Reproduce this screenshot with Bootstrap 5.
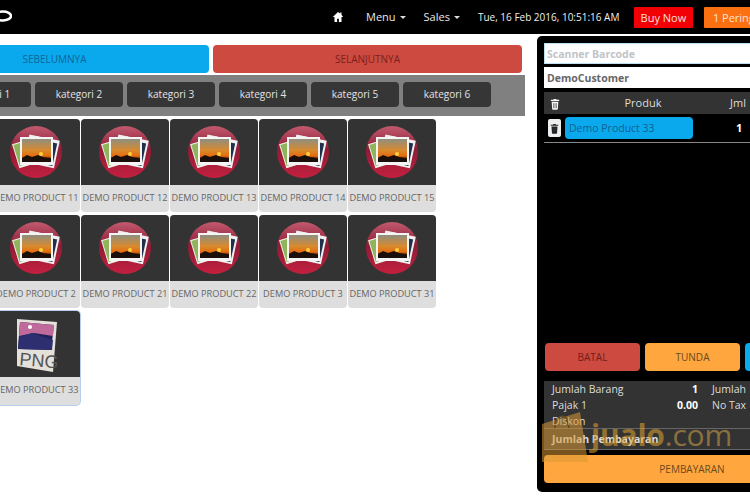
<!DOCTYPE html>
<html lang="id">
<head>
<meta charset="utf-8">
<title>POS</title>
<link href="https://cdn.jsdelivr.net/npm/bootstrap@5.3.0/dist/css/bootstrap.min.css" rel="stylesheet">
<style>
html,body{width:750px;height:500px;overflow:hidden;background:#fff;font-family:"Open Sans",sans-serif}
.pos-stage{width:850px;height:500px;position:relative}
.pos-top{height:34px;background:#000;padding:0;flex-wrap:nowrap;justify-content:flex-start}
.pos-logo{width:12px;height:34px;margin-right:320px;flex:none}
.pos-home{width:12px;height:12px;margin-right:22px;flex:none}
.pos-link{color:#e8e8e8;font-size:11px;white-space:nowrap}
.pos-link.menu-a{margin-right:18px}
.pos-link.menu-b{margin-right:18px}
.pos-caret{display:inline-block;border-top:3px solid #ddd;border-left:3px solid transparent;border-right:3px solid transparent;margin-left:4px;vertical-align:2px}
.pos-date{width:140px;margin-right:16px;font-size:10px;color:#eee;white-space:nowrap}
.pos-buy,.pos-alert{font-size:11px;line-height:1;border:0;border-radius:1px;height:21px;padding:0;color:#fde0d8;flex:none}
.pos-buy{width:59px;background:#f20006;margin-right:11px}
.pos-alert{width:90px;background:#fb7112;text-align:left;padding-left:9px}
.pos-body{margin-left:-57px;gap:12px;align-items:flex-start}
.pos-left{width:582px;flex:none;padding-top:11px}
.pos-nav{gap:4px}
.pos-nav .btn{height:28px;border:0;border-radius:4px;font-size:10px;padding:0;line-height:28px;flex:none}
.pos-prev,.pos-prev:hover{width:309px;margin-left:-43px;background:#0aa9ee;color:#0f6596}
.pos-next,.pos-next:hover{width:309px;background:#cd4a40;color:#7a1f1b}
.pos-cats{background:#808080;height:41px;margin-top:2px;padding:7px 0 0 0;gap:4px}
.pos-cats .btn{width:88px;height:25px;padding:0;line-height:25px;background:#363636;color:#e4e4e4;border:0;border-radius:4px;font-size:10px;flex:none}
.pos-grid{display:grid;grid-template-columns:repeat(5,88px);gap:3px 1px;margin-top:3px;margin-left:49px}
.pos-tile{height:93px;border-radius:4px;overflow:hidden;background:#dedede}
.pos-tile.sel{height:94px;box-shadow:0 0 0 1px #b7cdf0}
.pos-pic{height:66px;background:#333;display:flex;align-items:center;justify-content:center}
.pos-pic svg{width:56px;height:56px}
.pos-name{height:27px;line-height:26px;text-align:center;font-size:9.2px;color:#666;white-space:nowrap;overflow:hidden}
.pos-panel{width:240px;flex:none;height:456px;margin-top:2px;background:#000;border-radius:5px;padding:7px 7px 0 7px}
.pos-panel .form-control{height:21px;border-radius:0;border:1px solid #bcdff2;padding:0 2px;font-size:10.5px;font-weight:700;color:#666;width:225px;margin-bottom:3px}
.pos-panel .form-control::placeholder{color:#bfc4c8;opacity:1}
.pos-panel .cust{border-color:#fff}
.pos-head{height:22px;background:#333;margin-top:4px;color:#ddd;font-size:11px;align-items:center}
.pos-head .hd-trash{width:22px;text-align:center;flex:none}
.pos-head .hd-prod{width:158px;text-align:center;margin-left:-2px}
.pos-head .hd-jml{margin-left:8px}
.pos-row{height:29px;border-bottom:1px solid #888;align-items:center;padding-left:3px}
.pos-trashbtn{width:13px;height:18px;background:#eee;border-radius:2px;display:flex;align-items:center;justify-content:center;flex:none;margin-left:1px}
.pos-item{width:128px;height:22px;background:#0aa9ee;color:#126092;font-size:10.5px;line-height:22px;border-radius:4px;padding-left:4px;margin-left:4px;flex:none}
.pos-qty{font-size:11px;font-weight:700;color:#fff;margin-left:43px}
.pos-actions{margin-top:200px;gap:5px;margin-left:1px}
.pos-actions .btn{width:95px;height:28px;border:0;border-radius:4px;padding:0;font-size:10px;line-height:28px;flex:none}
.pos-batal,.pos-batal:hover{background:#cd4a40;color:#6e1e1a}
.pos-tunda,.pos-tunda:hover{background:#ffa63f;color:#6a4a1c}
.pos-third,.pos-third:hover{background:#0aa9ee;color:#126092}
.pos-sum{margin-top:10px;height:69px;background:#333;color:#ddd;font-size:10.5px;padding-left:8px;width:225px}
.pos-sum .sum-line{height:16px;line-height:16px}
.sum-a{width:146px;display:flex;justify-content:space-between;flex:none}
.sum-b{margin-left:14px;white-space:nowrap}
.sum-total{font-weight:700;border-top:1px solid #666;border-bottom:1px solid #666;height:22px!important;line-height:20px!important;margin:-1px 0 0 -8px;padding-left:8px}
.pos-pay,.pos-pay:hover{width:296px;height:28px;margin-top:5px;background:#ffa63f;color:#6a4a1c;border:0;border-radius:4px;font-size:10px;padding:0;line-height:28px;display:block}
.pos-mark{position:absolute;left:541px;top:408px;display:flex;align-items:flex-end;pointer-events:none;opacity:.55}
.pos-mark svg{width:50px;height:58px;flex:none}
.pos-mark-text{font-size:30px;line-height:34px;color:#d4a24a;margin-bottom:14px;letter-spacing:-.2px}
.pos-mark-text b{font-weight:700;color:#e0a52e}
</style>
</head>
<body>
<svg width="0" height="0" class="d-block">
<defs>
<linearGradient id="sunset" x1="0" y1="0" x2="0" y2="1"><stop offset="0" stop-color="#8f8f80"/><stop offset=".5" stop-color="#d98a2c"/><stop offset=".72" stop-color="#e56d12"/><stop offset="1" stop-color="#2a1408"/></linearGradient>
<linearGradient id="ball" x1="0" y1="0" x2="0" y2="1"><stop offset="0" stop-color="#c25a6e"/><stop offset=".45" stop-color="#8e1c36"/><stop offset="1" stop-color="#c4203f"/></linearGradient>
<symbol id="pic-stack" viewBox="0 0 56 56">
<circle cx="28" cy="28" r="26" fill="url(#ball)"/>
<g transform="rotate(-17 20 28)"><rect x="7" y="16" width="28" height="25" fill="#eef2e8"/><rect x="8" y="17" width="26" height="22" fill="#8fb45c"/></g>
<g transform="rotate(12 32 28)"><rect x="18" y="13" width="31" height="28" fill="#f0f0f0"/><rect x="21" y="16" width="26" height="23" fill="#20304a"/></g>
<rect x="12" y="13" width="33" height="28" fill="#f4f4f4"/>
<rect x="14" y="15" width="29" height="23" fill="url(#sunset)"/>
<path d="M14 38v-4l5-3 5 2 6-2 5 2 8 1v4z" fill="#1a0f0a"/>
<circle cx="33" cy="30" r="2" fill="#ffd23c"/>
</symbol>
<symbol id="trash" viewBox="0 0 12 14">
<path d="M4.500 1h3l.5 1h3v1.400H1V2h3zM2 4.300h8l-.6 8.700a1 1 0 0 1-1 1H3.600a1 1 0 0 1-1-1z" fill="currentColor"/>
<path d="M4.300 6v6M6 6v6M7.700 6v6" stroke="#333" stroke-width=".7"/>
</symbol>
</defs>
</svg>
<div class="pos-stage">
<nav class="navbar pos-top d-flex align-items-center">
<svg class="pos-logo" viewBox="0 0 12 34"><ellipse cx="3" cy="16" rx="8" ry="4.500" fill="none" stroke="#fff" stroke-width="2.500"/></svg>
<svg class="pos-home" viewBox="0 0 12 12"><path d="M6 1 .8 6h1.700v5h2.600V7.700h1.800V11h2.600V6h1.700L9.500 3.700V1.500H8.200v1z" fill="#fff"/></svg>
<span class="pos-link menu-a">Menu<span class="pos-caret"></span></span>
<span class="pos-link menu-b">Sales<span class="pos-caret"></span></span>
<span class="pos-date">Tue, 16 Feb 2016, 10:51:16 AM</span>
<button class="btn pos-buy" type="button">Buy Now</button>
<button class="btn pos-alert" type="button">1 Peringatan</button>
</nav>
<div class="pos-body d-flex">
<div class="pos-left">
<div class="pos-nav d-flex">
<button class="btn pos-prev" type="button">SEBELUMNYA</button>
<button class="btn pos-next" type="button">SELANJUTNYA</button>
</div>
<div class="pos-cats d-flex">
<button class="btn" type="button">kategori 1</button>
<button class="btn" type="button">kategori 2</button>
<button class="btn" type="button">kategori 3</button>
<button class="btn" type="button">kategori 4</button>
<button class="btn" type="button">kategori 5</button>
<button class="btn" type="button">kategori 6</button>
</div>
<div class="pos-grid">
<div class="pos-tile"><div class="pos-pic"><svg><use href="#pic-stack"/></svg></div><div class="pos-name">DEMO PRODUCT 11</div></div>
<div class="pos-tile"><div class="pos-pic"><svg><use href="#pic-stack"/></svg></div><div class="pos-name">DEMO PRODUCT 12</div></div>
<div class="pos-tile"><div class="pos-pic"><svg><use href="#pic-stack"/></svg></div><div class="pos-name">DEMO PRODUCT 13</div></div>
<div class="pos-tile"><div class="pos-pic"><svg><use href="#pic-stack"/></svg></div><div class="pos-name">DEMO PRODUCT 14</div></div>
<div class="pos-tile"><div class="pos-pic"><svg><use href="#pic-stack"/></svg></div><div class="pos-name">DEMO PRODUCT 15</div></div>
<div class="pos-tile"><div class="pos-pic"><svg><use href="#pic-stack"/></svg></div><div class="pos-name">DEMO PRODUCT 2</div></div>
<div class="pos-tile"><div class="pos-pic"><svg><use href="#pic-stack"/></svg></div><div class="pos-name">DEMO PRODUCT 21</div></div>
<div class="pos-tile"><div class="pos-pic"><svg><use href="#pic-stack"/></svg></div><div class="pos-name">DEMO PRODUCT 22</div></div>
<div class="pos-tile"><div class="pos-pic"><svg><use href="#pic-stack"/></svg></div><div class="pos-name">DEMO PRODUCT 3</div></div>
<div class="pos-tile"><div class="pos-pic"><svg><use href="#pic-stack"/></svg></div><div class="pos-name">DEMO PRODUCT 31</div></div>
<div class="pos-tile sel"><div class="pos-pic"><svg viewBox="0 0 56 56"><path d="M9 3 49 6 45 56 9 50z" fill="#e4e0da"/><path d="M12 6 46 9 43 34 10 33z" fill="#1e2358"/><path d="M12 6 46 9 45 20 26 17 11 20z" fill="#c06a9c"/><circle cx="22" cy="11" r="2" fill="#fff"/><path d="M11 21l13-4 21 7-1 10-34-1z" fill="#2d2f70"/><text x="11" y="49" font-family="Liberation Sans,sans-serif" font-size="18" fill="#555" transform="rotate(5 11 49)">PNG</text></svg></div><div class="pos-name">DEMO PRODUCT 33</div></div>
</div>
</div>
<div class="pos-panel">
<input class="form-control" type="text" placeholder="Scanner Barcode">
<input class="form-control cust" type="text" value="DemoCustomer">
<div class="pos-head d-flex"><span class="hd-trash"><svg width="10" height="12" class="text-light"><use href="#trash"/></svg></span><span class="hd-prod">Produk</span><span class="hd-jml">Jml</span></div>
<div class="pos-row d-flex"><span class="pos-trashbtn"><svg width="9" height="11" class="text-dark"><use href="#trash"/></svg></span><span class="pos-item">Demo Product 33</span><span class="pos-qty">1</span></div>
<div class="pos-actions d-flex">
<button class="btn pos-batal" type="button">BATAL</button>
<button class="btn pos-tunda" type="button">TUNDA</button>
<button class="btn pos-third" type="button">BAYAR</button>
</div>
<div class="pos-sum">
<div class="sum-line d-flex"><div class="sum-a"><span>Jumlah Barang</span><b class="text-white">1</b></div><span class="sum-b">Jumlah</span></div>
<div class="sum-line d-flex"><div class="sum-a"><span>Pajak 1</span><b class="text-white">0.00</b></div><span class="sum-b">No Tax</span></div>
<div class="sum-line">Diskon</div>
<div class="sum-line sum-total">Jumlah Pembayaran</div>
</div>
<button class="btn pos-pay" type="button">PEMBAYARAN</button>
</div>
</div>
<div class="pos-mark">
<svg viewBox="0 0 50 58"><path d="M1 16 39 4l8 50H1z" fill="#d99a35"/><path d="M14 20C13 8 24 5 26 12l2 8" fill="none" stroke="#8a5e1c" stroke-width="1.500"/></svg>
<span class="pos-mark-text"><b>jualo</b>.com</span>
</div>
</div>
</body>
</html>
